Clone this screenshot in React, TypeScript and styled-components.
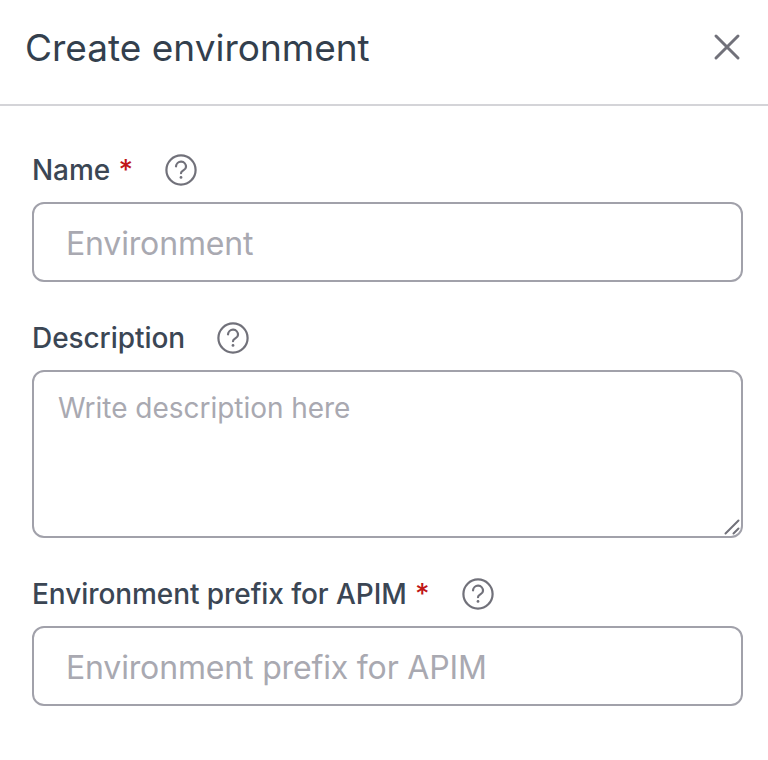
import React from "react";
import styled, { createGlobalStyle } from "styled-components";

const GlobalStyle = createGlobalStyle`
  html, body {
    margin: 0;
    padding: 0;
    background: #fff;
  }
  * {
    box-sizing: border-box;
  }
  body {
    font-family: Inter, "Liberation Sans", sans-serif;
  }
`;

const HelpIcon = () => (
  <HelpSvg viewBox="0 0 32 32" fill="none" stroke="#71717a" strokeWidth="2.2">
    <circle cx="16" cy="16" r="14.6" />
    <path d="M11 12.4a5 5 0 0 1 10 .6c0 3.3-5 3.5-5 6.2" strokeLinecap="round" strokeLinejoin="round" />
    <circle cx="16" cy="23.4" r="1.4" fill="#71717a" stroke="none" />
  </HelpSvg>
);

export default function App() {
  return (
    <Panel>
      <GlobalStyle />
      <Header>
        <Title>Create environment</Title>
        <CloseButton aria-label="Close">
          <svg width="28" height="28" viewBox="0 0 28 28" fill="none" stroke="#71717a" strokeWidth="3" strokeLinecap="round">
            <path d="M3 3l22 22M25 3L3 25" />
          </svg>
        </CloseButton>
      </Header>
      <Form>
        <Field>
          <LabelRow>
            <Label>
              Name <Required>*</Required>
            </Label>
            <HelpIcon />
          </LabelRow>
          <Input placeholder="Environment" />
        </Field>
        <Field>
          <LabelRow>
            <Label>Description</Label>
            <HelpIcon />
          </LabelRow>
          <TextareaWrap>
            <Textarea placeholder="Write description here" />
            <Grip viewBox="0 0 16 16" fill="none" stroke="#71717a" strokeWidth="2" strokeLinecap="round">
              <path d="M1.5 14.5L14.5 1.5M9.5 14.5l5-5" />
            </Grip>
          </TextareaWrap>
        </Field>
        <Field>
          <LabelRow>
            <Label>
              Environment prefix for APIM <Required>*</Required>
            </Label>
            <HelpIcon />
          </LabelRow>
          <Input placeholder="Environment prefix for APIM" />
        </Field>
      </Form>
    </Panel>
  );
}

const Panel = styled.div`
  width: 768px;
  height: 760px;
  background: #fff;
  overflow: hidden;
`;

const Header = styled.header`
  height: 106px;
  padding: 0 27px 10px 25px;
  display: flex;
  align-items: center;
  justify-content: space-between;
  border-bottom: 2px solid #d4d4d8;
`;

const Title = styled.h1`
  margin: 2px 0 0;
  font-size: 37px;
  line-height: 48px;
  font-weight: 400;
  color: #333f4d;
`;

const CloseButton = styled.button`
  width: 28px;
  height: 28px;
  padding: 0;
  border: 0;
  background: none;
  display: flex;
`;

const Form = styled.form`
  padding: 42px 25px 0 32px;
  display: flex;
  flex-direction: column;
  gap: 34px;
`;

const Field = styled.div`
  display: flex;
  flex-direction: column;
  gap: 10px;
`;

const LabelRow = styled.div`
  height: 44px;
  display: flex;
  align-items: center;
  gap: 32px;
`;

const Label = styled.label`
  font-size: 28px;
  line-height: 44px;
  font-weight: 500;
  letter-spacing: -0.07px;
  color: #3b4654;
`;

const Required = styled.span`
  color: #c01616;
  margin-left: 1px;
`;

const HelpSvg = styled.svg`
  width: 32px;
  height: 32px;
  flex: none;
`;

const Input = styled.input`
  width: 711px;
  height: 80px;
  padding: 2px 32px 0;
  border: 2px solid #a1a1aa;
  border-radius: 12px;
  outline: none;
  font: 400 32px Inter, sans-serif;
  letter-spacing: -0.16px;
  color: #333f4d;
  background: #fff;

  &::placeholder {
    color: #a9a9b1;
    opacity: 1;
  }
`;

const TextareaWrap = styled.div`
  position: relative;
  width: 711px;
  height: 168px;
  display: flex;
`;

const Textarea = styled.textarea`
  width: 100%;
  height: 100%;
  padding: 16px 24px;
  border: 2px solid #a1a1aa;
  border-radius: 12px;
  outline: none;
  resize: none;
  font: 400 28px/40px Inter, sans-serif;
  letter-spacing: -0.03px;
  color: #333f4d;
  background: #fff;

  &::placeholder {
    color: #a9a9b1;
    opacity: 1;
  }
`;

const Grip = styled.svg`
  position: absolute;
  right: 3px;
  bottom: 3px;
  width: 16px;
  height: 16px;
`;
